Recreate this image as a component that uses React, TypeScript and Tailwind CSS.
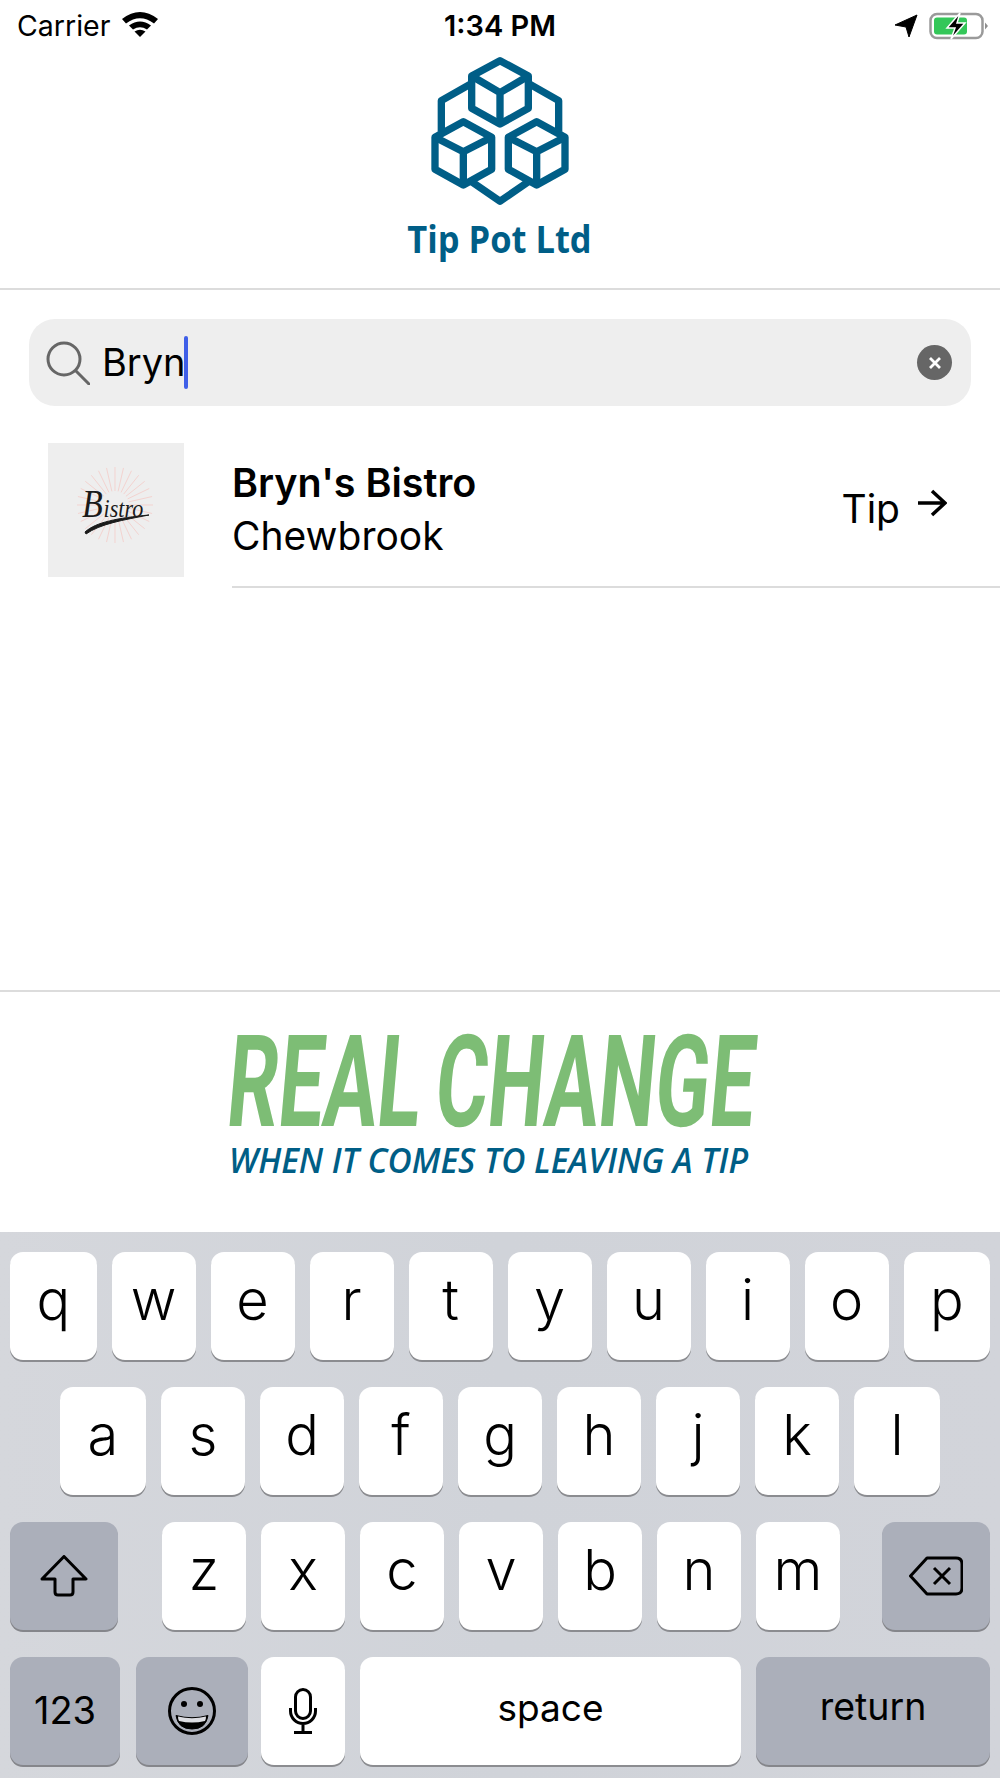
import type { ReactNode } from "react";

const rowOne = ["q", "w", "e", "r", "t", "y", "u", "i", "o", "p"];
const rowTwo = ["a", "s", "d", "f", "g", "h", "j", "k", "l"];
const rowThree = ["z", "x", "c", "v", "b", "n", "m"];

function LetterKey({ label, wide }: { label: string; wide?: boolean }) {
  return (
    <div
      className={`${wide ? "flex-1" : "w-[84px]"} h-[108px] rounded-[13px] bg-white shadow-[0_2px_0_#8b8c90] flex items-center justify-center pb-[12px] text-[56px] font-light leading-none text-black`}
    >
      {label}
    </div>
  );
}

function GreyKey({ className, children }: { className: string; children: ReactNode }) {
  return (
    <div className={`h-[108px] rounded-[13px] bg-[#abafba] shadow-[0_2px_0_#85868b] flex items-center justify-center ${className}`}>
      {children}
    </div>
  );
}

function StatusBar() {
  return (
    <div className="h-[48px] shrink-0 relative flex items-center pt-[4px] pl-[17px] pr-[11px] text-[28.5px] text-black">
      <span>Carrier</span>
      <svg viewBox="0 0 36 27" className="ml-[12px] w-[36px] h-[27px] -mt-[5px]">
        <path d="M0 9Q18 -5 36 9L32 13.5Q18 3 4 13.5Z" fill="#000" />
        <path d="M7 15.5Q18 7.5 29 15.5L25 19.5Q18 15 11 19.5Z" fill="#000" />
        <path d="M18 27L12.5 21.5Q18 18 23.5 21.5Z" fill="#000" />
      </svg>
      <span className="absolute left-0 right-0 text-center font-semibold text-[29px]">1:34 PM</span>
      <div className="ml-auto flex items-center">
        <svg viewBox="0 0 24 24" className="w-[24px] h-[24px]">
          <path d="M23 1L1 11L12 13L15 23Z" fill="#000" stroke="#000" strokeLinejoin="round" />
        </svg>
        <svg viewBox="0 0 60 28" className="ml-[11px] w-[60px] h-[28px]">
          <rect x="1.5" y="2" width="52" height="24" rx="6.5" fill="none" stroke="#9a9a9a" strokeWidth="2.5" />
          <rect x="5" y="5.5" width="33" height="17" rx="3" fill="#34c759" />
          <path d="M56 10.5L59 14L56 17.5Z" fill="#8e8e8e" />
          <path d="M31 1L18 16H26L22 27L36 11H28Z" fill="#000" stroke="#fff" strokeWidth="1.5" />
        </svg>
      </div>
    </div>
  );
}

function CompanyLogo() {
  return (
    <svg viewBox="0 0 720 690" className="w-[240px] h-[230px] -mt-[8px]">
      <g fill="none" stroke="#005e87" strokeWidth="22" strokeLinejoin="round">
        <path d="M360 62L445 108V205L360 252L275 205V108Z" />
        <path d="M275 108L360 158L445 108M360 158V252" />
        <path d="M250 245L335 292V388L250 435L165 388V292Z" />
        <path d="M165 292L250 335L335 292M250 335V435" />
        <path d="M470 245L555 292V388L470 435L385 388V292Z" />
        <path d="M385 292L470 335L555 292M470 335V435" />
        <path d="M275 130L184 182V275" />
        <path d="M445 130L536 182V275" />
        <path d="M275 425L360 484L445 425" />
      </g>
      <text
        x="82"
        y="638"
        textLength="553"
        lengthAdjust="spacingAndGlyphs"
        fill="#005e87"
        fontFamily="'Open Sans', sans-serif"
        fontWeight="700"
        fontSize="112"
      >
        Tip Pot Ltd
      </text>
    </svg>
  );
}

function BistroThumb() {
  const rays = Array.from({ length: 28 }, (_, i) => (i * Math.PI * 2) / 28);
  return (
    <svg viewBox="0 0 136 134" className="w-[136px] h-[134px] shrink-0 bg-[#eeeeee]">
      {rays.map((a) => (
        <line
          key={a}
          x1={67 + Math.cos(a) * 14}
          y1={62 + Math.sin(a) * 14}
          x2={67 + Math.cos(a) * 38}
          y2={62 + Math.sin(a) * 38}
          stroke="#f3d3d0"
          strokeWidth="1"
        />
      ))}
      <text
        x="40"
        y="74"
        transform="scale(0.85 1)"
        fontFamily="'Liberation Serif', serif"
        fontStyle="italic"
        fontSize="26"
        fill="#1a1a1a"
      >
        <tspan fontSize="40">B</tspan>
        <tspan dx="1">istro</tspan>
      </text>
      <path d="M37 89C48 79 70 75 101 72C75 77 52 81 38 91Z" fill="#1a1a1a" stroke="#1a1a1a" />
    </svg>
  );
}

function ChangeBanner() {
  return (
    <svg viewBox="0 0 560 210" className="w-[560px] h-[210px]">
      <text
        x="24"
        y="120"
        transform="skewX(-5) scale(0.625 1)"
        wordSpacing="-8"
        fontFamily="'Roboto', sans-serif"
        fontWeight="700"
        fontSize="128"
        fill="#7dbd75"
      >
        REAL CHANGE
      </text>
      <text
        x="9"
        y="167"
        textLength="519"
        lengthAdjust="spacingAndGlyphs"
        fontFamily="'Open Sans', sans-serif"
        fontStyle="italic"
        fontWeight="600"
        fontSize="35"
        fill="#005e86"
      >
        WHEN IT COMES TO LEAVING A TIP
      </text>
    </svg>
  );
}

function Keyboard() {
  return (
    <div className="h-[546px] shrink-0 flex flex-col gap-[27px] pt-[20px] bg-gradient-to-r from-[#d5d7dc] via-[#d0d3d9] to-[#d2d4da]">
      <div className="flex gap-[15px] px-[10px]">
        {rowOne.map((k) => (
          <LetterKey key={k} label={k} wide={k === "q" || k === "p"} />
        ))}
      </div>
      <div className="flex gap-[15px] px-[60px]">
        {rowTwo.map((k) => (
          <LetterKey key={k} label={k} wide={k === "a" || k === "l"} />
        ))}
      </div>
      <div className="flex px-[10px]">
        <GreyKey className="w-[108px]">
          <svg viewBox="0 0 48 42" className="w-[48px] h-[42px]">
            <path
              d="M24 1.5L46 24H33V37Q33 40 30 40H18Q15 40 15 37V24H2Z"
              fill="none"
              stroke="#000"
              strokeWidth="3"
              strokeLinejoin="round"
            />
          </svg>
        </GreyKey>
        <div className="ml-[44px] flex gap-[15px]">
          {rowThree.map((k) => (
            <LetterKey key={k} label={k} />
          ))}
        </div>
        <GreyKey className="ml-auto w-[108px]">
          <svg viewBox="0 0 54 40" className="w-[54px] h-[40px]">
            <path
              d="M1.5 20L18 2H47Q53 2 53 8V32Q53 38 47 38H18Z"
              fill="none"
              stroke="#000"
              strokeWidth="3"
              strokeLinejoin="round"
            />
            <path d="M25 12L41 28M41 12L25 28" stroke="#000" strokeWidth="3" />
          </svg>
        </GreyKey>
      </div>
      <div className="flex px-[10px]">
        <GreyKey className="w-[110px] pb-[2px] text-[38px] text-black">123</GreyKey>
        <GreyKey className="ml-[16px] w-[112px]">
          <svg viewBox="0 0 48 48" className="w-[48px] h-[48px]">
            <circle cx="24" cy="24" r="22.5" fill="none" stroke="#000" strokeWidth="3" />
            <circle cx="16" cy="17" r="3" fill="#000" />
            <circle cx="32" cy="17" r="3" fill="#000" />
            <path d="M8 28.5Q24 33 40 28.5Q38 42 24 42Q10 42 8 28.5Z" fill="#000" stroke="#000" strokeLinejoin="round" />
            <path d="M10 29.5Q24 33 38 29.5Q38 33 37 34Q24 37 11 34Q10 33 10 29.5Z" fill="#dcdde2" />
          </svg>
        </GreyKey>
        <div className="ml-[13px] w-[84px] h-[108px] rounded-[13px] bg-white shadow-[0_2px_0_#8b8c90] flex items-center justify-center">
          <svg viewBox="0 0 28 46" className="w-[28px] h-[46px]">
            <rect x="6.5" y="1.5" width="15" height="29" rx="7.5" fill="none" stroke="#000" strokeWidth="3" />
            <path d="M1.5 20V23A12.5 12.5 0 0 0 26.5 23V20M14 36V44M5 44.5H23" fill="none" stroke="#000" strokeWidth="3" />
          </svg>
        </div>
        <div className="ml-[15px] flex-1 h-[108px] rounded-[13px] bg-white shadow-[0_2px_0_#8b8c90] flex items-center justify-center pb-[7px] text-[37px] text-black">
          space
        </div>
        <GreyKey className="ml-[15px] w-[234px] pb-[7px] text-[37.5px] text-black">return</GreyKey>
      </div>
    </div>
  );
}

export default function App() {
  return (
    <div className="w-full h-[1778px] overflow-hidden bg-white flex flex-col font-[family-name:Inter,sans-serif]">
      <StatusBar />

      <div className="h-[242px] shrink-0 border-b-2 border-[#dcdcdc] flex justify-center">
        <CompanyLogo />
      </div>

      {/* search field */}
      <div className="mt-[29px] mx-[29px] h-[87px] rounded-[26px] bg-[#eeeeee] flex items-center pl-[17px] pr-[19px]">
        <svg viewBox="0 0 44 44" className="w-[44px] h-[44px]">
          <circle cx="18" cy="18" r="16" fill="none" stroke="#666" strokeWidth="3" />
          <path d="M30 30L43 43" stroke="#666" strokeWidth="3" strokeLinecap="round" />
        </svg>
        <span className="ml-[12px] text-[38px] text-black">Bryn</span>
        <span className="-ml-[2px] w-[4px] h-[53px] rounded-full bg-[#3f5fe8]" />
        <div className="ml-auto w-[35px] h-[35px] rounded-full bg-[#666666] flex items-center justify-center">
          <svg viewBox="0 0 14 14" className="w-[14px] h-[14px]">
            <path d="M2 2L12 12M12 2L2 12" stroke="#fff" strokeWidth="2.8" />
          </svg>
        </div>
      </div>

      {/* search result */}
      <div className="mt-[37px] flex pl-[48px]">
        <BistroThumb />
        <div className="ml-[48px] flex-1 h-[145px] border-b-2 border-[#dcdcdc] flex items-center pr-[53px]">
          <div className="flex flex-col pb-[10px]">
            <span className="text-[39.5px] leading-[52px] font-semibold text-black">Bryn's Bistro</span>
            <span className="text-[39px] leading-[53px] text-black">Chewbrook</span>
          </div>
          <span className="ml-auto pb-[10px] text-[39px] text-black">Tip</span>
          <svg viewBox="0 0 30 28" className="ml-[17px] -mt-[23px] w-[30px] h-[28px]">
            <path d="M1 14H28M15 2L28 14L15 26" fill="none" stroke="#000" strokeWidth="3.5" />
          </svg>
        </div>
      </div>

      {/* promo banner */}
      <div className="mt-auto h-[242px] shrink-0 border-t-2 border-[#dcdcdc] flex justify-center pt-[14px]">
        <ChangeBanner />
      </div>

      <Keyboard />
    </div>
  );
}
